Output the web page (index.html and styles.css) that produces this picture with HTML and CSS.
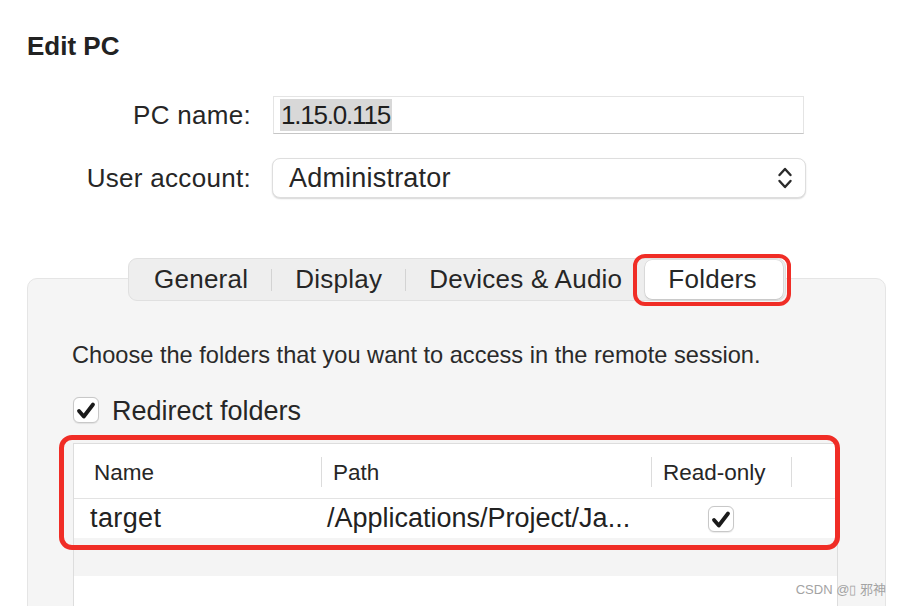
FILE: index.html
```html
<!DOCTYPE html>
<html lang="en">
<head>
<meta charset="utf-8">
<title>Edit PC</title>
<link rel="stylesheet" href="styles.css">
</head>
<body>
<main class="sheet">
  <h1 class="title">Edit PC</h1>

  <div class="form">
    <label class="label">PC name:</label>
    <div class="field"><span class="sel">1.15.0.115</span></div>

    <label class="label">User account:</label>
    <div class="popup">
      <span class="popup-value">Administrator</span>
      <svg class="updown" width="16" height="24" viewBox="0 0 16 24" aria-hidden="true">
        <path d="M2.5 9 L8 3 L13.5 9" fill="none" stroke="#2a2a2a" stroke-width="2.4" stroke-linecap="round" stroke-linejoin="round"/>
        <path d="M2.5 15 L8 21 L13.5 15" fill="none" stroke="#2a2a2a" stroke-width="2.4" stroke-linecap="round" stroke-linejoin="round"/>
      </svg>
    </div>
  </div>

  <section class="panel">
    <div class="tabs">
      <div class="seg">General</div>
      <span class="sep"></span>
      <div class="seg">Display</div>
      <span class="sep"></span>
      <div class="seg">Devices &amp; Audio</div>
      <div class="seg active">Folders</div>
    </div>

    <p class="desc">Choose the folders that you want to access in the remote session.</p>

    <div class="check-row">
      <span class="checkbox">
        <svg width="26" height="26" viewBox="0 0 26 26" aria-hidden="true"><path d="M6 14 L10.8 19.5 L20 7.5" fill="none" stroke="#1a1a1a" stroke-width="3.8" stroke-linecap="round" stroke-linejoin="round"/></svg>
      </span>
      <span class="check-label">Redirect folders</span>
    </div>

    <div class="table">
      <div class="hl">
        <div class="thead">
          <div class="th">Name</div>
          <div class="th">Path</div>
          <div class="th">Read-only</div>
          <div class="th"></div>
        </div>
        <div class="row">
          <div class="td name">target</div>
          <div class="td path">/Applications/Project/Ja...</div>
          <div class="td ro">
            <span class="checkbox">
              <svg width="26" height="26" viewBox="0 0 26 26" aria-hidden="true"><path d="M6 14 L10.8 19.5 L20 7.5" fill="none" stroke="#1a1a1a" stroke-width="3.8" stroke-linecap="round" stroke-linejoin="round"/></svg>
            </span>
          </div>
          <div class="td"></div>
        </div>
      </div>
      <div class="row alt"></div>
      <div class="row"></div>
    </div>
  </section>

  <div class="watermark">CSDN @▯ 邪神</div>
</main>
</body>
</html>
```

FILE: styles.css
```css
body {
  margin: 0;
  background: #ffffff;
  font-family: "Liberation Sans", Arial, sans-serif;
  color: #262626;
}

.sheet {
  position: relative;
  width: 902px;
  height: 606px;
  overflow: hidden;
}

.title {
  margin: 0;
  padding: 31px 0 0 27px;
  font-size: 26px;
  line-height: 30px;
  font-weight: 700;
  color: #222222;
}

.form {
  display: grid;
  grid-template-columns: 251px 534px;
  column-gap: 21px;
  row-gap: 24px;
  align-items: center;
  margin-top: 35px;
}

.label {
  text-align: right;
  font-size: 26px;
  line-height: 30px;
  letter-spacing: 0.3px;
  color: #262626;
}

.field {
  margin-left: 1px;
  width: 531px;
  height: 38px;
  box-sizing: border-box;
  border: 1px solid #e4e4e4;
  border-bottom-color: #c6c6c6;
  background: #ffffff;
  display: flex;
  align-items: center;
  padding-left: 6px;
}

.sel {
  background: #d8d8d8;
  font-size: 26px;
  line-height: 32px;
  letter-spacing: -1.2px;
  padding: 0 2px 0 1px;
  color: #1e1e1e;
}

.popup {
  width: 534px;
  height: 40px;
  box-sizing: border-box;
  border: 1px solid #dedede;
  border-radius: 8px;
  box-shadow: 0 1px 1.5px rgba(0, 0, 0, 0.16);
  background: #ffffff;
  display: flex;
  align-items: center;
  justify-content: space-between;
  padding: 0 12px 0 16px;
  font-size: 27px;
  letter-spacing: 0.2px;
}

.updown {
  display: block;
}

.panel {
  margin: 80px 16px 0 27px;
  height: 400px;
  background: #f5f5f5;
  border: 1px solid #e5e5e5;
  border-radius: 10px;
}

.tabs {
  display: flex;
  align-items: center;
  width: max-content;
  height: 43px;
  box-sizing: border-box;
  margin: -21px 0 0 100px;
  padding: 0 2px;
  background: #eeeeee;
  border: 1px solid #e0e0e0;
  border-radius: 9px;
}

.seg {
  padding: 0 23px;
  font-size: 26px;
  letter-spacing: 0.25px;
  line-height: 37px;
  color: #262626;
}

.seg.active {
  position: relative;
  background: #ffffff;
  border-radius: 7px;
  padding: 0 26px 0 23px;
  line-height: 39px;
  box-shadow: 0 0 0 0.5px rgba(0, 0, 0, 0.1), 0 1px 2px rgba(0, 0, 0, 0.14);
}

.seg.active::after {
  content: "";
  position: absolute;
  top: -6px;
  left: -12px;
  right: -8px;
  bottom: -7px;
  border: 4px solid #f02d26;
  border-radius: 12px;
  pointer-events: none;
}

.sep {
  width: 1px;
  height: 22px;
  background: #d3d3d3;
}

.desc {
  margin: 40px 0 0 44px;
  font-size: 23.6px;
  line-height: 28px;
  color: #2a2a2a;
}

.check-row {
  display: flex;
  align-items: center;
  gap: 13px;
  margin: 28px 0 0 45px;
  height: 26px;
}

.check-label {
  font-size: 27px;
  line-height: 26px;
  padding-top: 2px;
}

.checkbox {
  width: 26px;
  height: 26px;
  box-sizing: border-box;
  border: 1px solid #c8c8c8;
  border-radius: 6px;
  background: #ffffff;
  box-shadow: 0 0.5px 1px rgba(0, 0, 0, 0.08);
  display: flex;
  align-items: center;
  justify-content: center;
}

.checkbox svg {
  display: block;
  flex: none;
}

.table {
  margin: 20px 0 0 45px;
  width: 765px;
  height: 300px;
  box-sizing: border-box;
  border: 1px solid #dddddd;
  border-bottom: none;
  background: #ffffff;
}

.hl {
  position: relative;
}

.hl::after {
  content: "";
  position: absolute;
  top: -9px;
  left: -15px;
  right: -3px;
  bottom: -12px;
  border: 5px solid #f02d26;
  border-radius: 13px;
  pointer-events: none;
}

.thead {
  display: grid;
  grid-template-columns: 247px 330px 140px 1fr;
  align-items: center;
  height: 54px;
  border-bottom: 1px solid #e3e3e3;
}

.th {
  height: 30px;
  line-height: 31px;
  font-size: 22.5px;
  padding-left: 20px;
  margin-top: 2px;
  color: #262626;
}

.th + .th {
  border-left: 1px solid #dcdcdc;
  padding-left: 11px;
}

.row {
  display: grid;
  grid-template-columns: 247px 330px 140px 1fr;
  align-items: center;
  height: 39px;
  font-size: 27px;
  color: #222222;
}

.row.alt {
  height: 38px;
  background: #f4f4f4;
}

.td.name {
  padding-left: 16px;
  letter-spacing: 0.4px;
}

.td.path {
  padding-left: 6px;
  white-space: nowrap;
}

.td.ro {
  display: flex;
  justify-content: center;
}

.watermark {
  position: absolute;
  right: 16px;
  bottom: 8px;
  font-family: "Liberation Sans", "Noto Sans CJK SC", sans-serif;
  font-size: 13px;
  color: #a3a3a3;
}
```
